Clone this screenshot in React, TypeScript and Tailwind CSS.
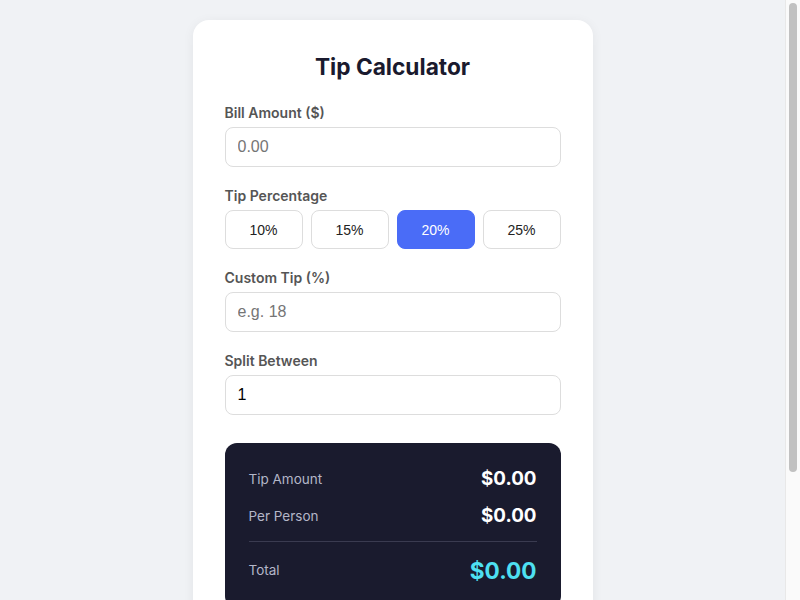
import { useState } from "react";

const TIPS = [10, 15, 20, 25];

export default function App() {
  const [bill, setBill] = useState("");
  const [tip, setTip] = useState(20);
  const [custom, setCustom] = useState("");
  const [split, setSplit] = useState("1");

  const amount = parseFloat(bill) || 0;
  const pct = custom !== "" ? parseFloat(custom) || 0 : tip;
  const people = Math.max(1, parseInt(split) || 1);
  const tipAmount = (amount * pct) / 100;
  const total = amount + tipAmount;
  const perPerson = total / people;

  const inputCls =
    "w-full h-10 px-3 rounded-lg border border-[#dddddd] bg-white text-base text-black placeholder:text-[#757575] outline-none focus:border-[#4a6cf7] [font-family:'Liberation_Sans',Arial,sans-serif]";
  const labelCls = "mb-1.5 block text-sm leading-[17px] font-semibold text-[#555555]";

  return (
    <div className="relative h-screen bg-[#f0f2f5] [font-family:Inter,'Noto_Sans',sans-serif]">
      <div className="h-full overflow-y-auto pr-[15px] [scrollbar-width:none]">
        <div className="pt-5 pb-[126px]">
          <div className="mx-auto w-[400px] rounded-2xl bg-white p-8 shadow-[0_2px_12px_rgba(0,0,0,0.06)]">
            <h1 className="mb-[23px] text-center text-[22.7px] leading-[29px] font-bold text-[#1a1a2e]">Tip Calculator</h1>

            <div className="mb-5">
              <label className={labelCls}>Bill Amount ($)</label>
              <input className={inputCls} placeholder="0.00" value={bill} onChange={(e) => setBill(e.target.value)} />
            </div>

            <div className="mb-5">
              <label className={labelCls}>Tip Percentage</label>
              <div className="grid grid-cols-4 gap-2">
                {TIPS.map((t) => {
                  const active = custom === "" && tip === t;
                  return (
                    <button
                      key={t}
                      onClick={() => {
                        setTip(t);
                        setCustom("");
                      }}
                      className={
                        active
                          ? "h-[39px] rounded-lg border border-[#4a6cf7] bg-[#4a6cf7] text-sm text-white [font-family:'Liberation_Sans',Arial,sans-serif]"
                          : "h-[39px] rounded-lg border border-[#dddddd] bg-white text-sm text-[#222222] [font-family:'Liberation_Sans',Arial,sans-serif]"
                      }
                    >
                      {t}%
                    </button>
                  );
                })}
              </div>
            </div>

            <div className="mb-5">
              <label className={labelCls}>Custom Tip (%)</label>
              <input className={inputCls} placeholder="e.g. 18" value={custom} onChange={(e) => setCustom(e.target.value)} />
            </div>

            <div>
              <label className={labelCls}>Split Between</label>
              <input className={inputCls} value={split} onChange={(e) => setSplit(e.target.value)} />
            </div>

            <div className="mt-7 rounded-xl bg-[#1a1b2e] p-6">
              <div className="flex h-6 items-center justify-between">
                <span className="text-[13.5px] text-[#b4b6c8]">Tip Amount</span>
                <span className="text-[18.8px] font-bold text-white">${tipAmount.toFixed(2)}</span>
              </div>
              <div className="mt-[13px] flex h-6 items-center justify-between">
                <span className="text-[13.5px] text-[#b4b6c8]">Per Person</span>
                <span className="text-[18.8px] font-bold text-white">${perPerson.toFixed(2)}</span>
              </div>
              <div className="mt-[13px] flex h-[43px] items-center justify-between border-t border-[#3a3b50] pt-3.5">
                <span className="text-[13.5px] text-[#b4b6c8]">Total</span>
                <span className="text-[22.6px] leading-[29px] font-bold text-[#4ee0f2]">${total.toFixed(2)}</span>
              </div>
            </div>
          </div>
        </div>
      </div>

      {/* scrollbar strip as seen in the reference */}
      <div className="pointer-events-none absolute top-0 right-0 h-full w-[15px] border-l border-[#e8e8e8] bg-[#fafafa]">
        <div className="mx-auto mt-[3px] h-[469px] w-2 rounded-full bg-[#c1c1c1]" />
      </div>
    </div>
  );
}
